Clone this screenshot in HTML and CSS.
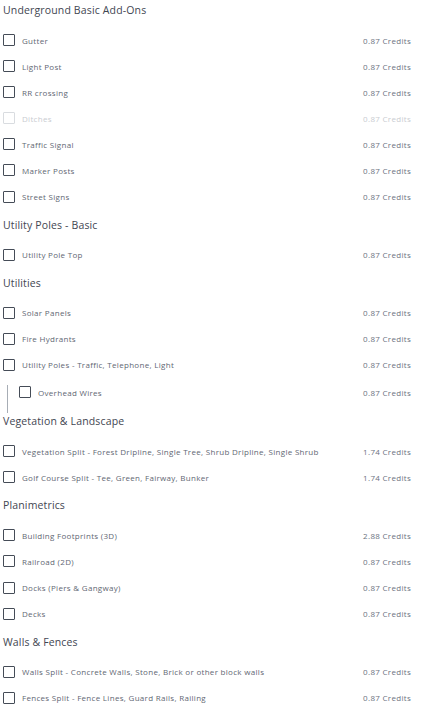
FILE: index.html
```html
<!DOCTYPE html>
<html>
<head>
<meta charset="utf-8">
<link rel="stylesheet" href="styles.css">
</head>
<body>
<div class="page">
  <section class="group">
    <h2 class="group-title">Underground Basic Add-Ons</h2>
    <div class="row"><span class="box"></span><span class="label">Gutter</span><span class="credits">0.87 Credits</span></div>
    <div class="row"><span class="box"></span><span class="label">Light Post</span><span class="credits">0.87 Credits</span></div>
    <div class="row"><span class="box"></span><span class="label">RR crossing</span><span class="credits">0.87 Credits</span></div>
    <div class="row disabled"><span class="box"></span><span class="label">Ditches</span><span class="credits">0.87 Credits</span></div>
    <div class="row"><span class="box"></span><span class="label">Traffic Signal</span><span class="credits">0.87 Credits</span></div>
    <div class="row"><span class="box"></span><span class="label">Marker Posts</span><span class="credits">0.87 Credits</span></div>
    <div class="row"><span class="box"></span><span class="label">Street Signs</span><span class="credits">0.87 Credits</span></div>
  </section>
  <section class="group">
    <h2 class="group-title">Utility Poles - Basic</h2>
    <div class="row"><span class="box"></span><span class="label">Utility Pole Top</span><span class="credits">0.87 Credits</span></div>
  </section>
  <section class="group">
    <h2 class="group-title">Utilities</h2>
    <div class="row"><span class="box"></span><span class="label">Solar Panels</span><span class="credits">0.87 Credits</span></div>
    <div class="row"><span class="box"></span><span class="label">Fire Hydrants</span><span class="credits">0.87 Credits</span></div>
    <div class="row"><span class="box"></span><span class="label">Utility Poles - Traffic, Telephone, Light</span><span class="credits">0.87 Credits</span></div>
    <div class="nested">
      <div class="row"><span class="box"></span><span class="label">Overhead Wires</span><span class="credits">0.87 Credits</span></div>
    </div>
  </section>
  <section class="group">
    <h2 class="group-title">Vegetation &amp; Landscape</h2>
    <div class="row"><span class="box"></span><span class="label">Vegetation Split - Forest Dripline, Single Tree, Shrub Dripline, Single Shrub</span><span class="credits">1.74 Credits</span></div>
    <div class="row"><span class="box"></span><span class="label">Golf Course Split - Tee, Green, Fairway, Bunker</span><span class="credits">1.74 Credits</span></div>
  </section>
  <section class="group">
    <h2 class="group-title">Planimetrics</h2>
    <div class="row"><span class="box"></span><span class="label">Building Footprints (3D)</span><span class="credits">2.88 Credits</span></div>
    <div class="row"><span class="box"></span><span class="label">Railroad (2D)</span><span class="credits">0.87 Credits</span></div>
    <div class="row"><span class="box"></span><span class="label">Docks (Piers &amp; Gangway)</span><span class="credits">0.87 Credits</span></div>
    <div class="row"><span class="box"></span><span class="label">Decks</span><span class="credits">0.87 Credits</span></div>
  </section>
  <section class="group">
    <h2 class="group-title">Walls &amp; Fences</h2>
    <div class="row"><span class="box"></span><span class="label">Walls Split - Concrete Walls, Stone, Brick or other block walls</span><span class="credits">0.87 Credits</span></div>
    <div class="row"><span class="box"></span><span class="label">Fences Split - Fence Lines, Guard Rails, Railing</span><span class="credits">0.87 Credits</span></div>
  </section>
</div>
</body>
</html>
```

FILE: styles.css
```css
* { box-sizing: border-box; }
body {
  margin: 0;
  background: #ffffff;
  font-family: "Open Sans", "Noto Sans", sans-serif;
  color: #4b5563;
}
.page {
  padding: 2px 10px 0 3px;
}
.group {
  display: flex;
  flex-direction: column;
}
.group-title {
  margin: 0 0 15px 0;
  height: 17px;
  font-size: 10.5px;
  line-height: 17px;
  font-weight: 500;
  color: #3f4652;
  letter-spacing: 0.15px;
}
.row {
  display: flex;
  align-items: center;
  height: 12px;
  margin-bottom: 14.1px;
}
.box {
  width: 12px;
  height: 12px;
  border: 1.5px solid #454c57;
  border-radius: 1px;
  flex: none;
}
.label {
  margin-left: 7px;
  font-size: 8px;
  letter-spacing: 0.3px;
  color: #5f6773;
  flex: 1;
  white-space: nowrap;
}
.credits {
  font-size: 8px;
  letter-spacing: 0.3px;
  color: #6b7280;
  white-space: nowrap;
}
.disabled .box { border-color: #d9dce0; }
.disabled .label, .disabled .credits { color: #c9ccd1; }
.nested {
  margin-left: 4px;
  padding: 1px 0 1px 11px;
  border-left: 1px solid #a7adb5;
}
```
